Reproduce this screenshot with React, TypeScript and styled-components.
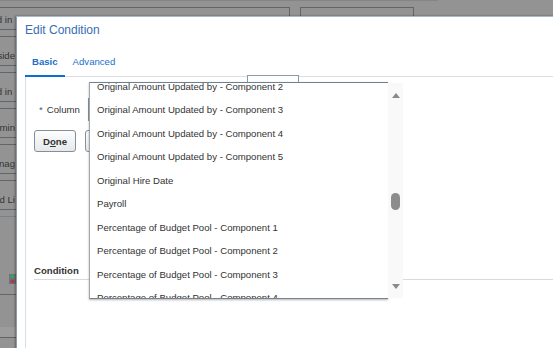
import React from "react";
import styled, { createGlobalStyle } from "styled-components";

const Global = createGlobalStyle`
  html, body { margin: 0; padding: 0; overflow: hidden; }
  body { font-family: "Liberation Sans", Arial, sans-serif; }
  #root { width: 553px; height: 348px; position: relative; overflow: hidden; }
`;

const FONT = 9.6;

/* ---------- background page (dimmed by modal) ---------- */
const BgPage = styled.div`
  width: 553px;
  height: 348px;
  background: #939393;
  display: flex;
  flex-direction: column;
  font-size: ${FONT}px;
  color: #343434;
`;

const BgTopLine = styled.div`
  width: 438px;
  height: 1px;
  background: #858585;
  margin-bottom: 6px;
`;

const BgRow = styled.div<{ $h: number }>`
  display: flex;
  gap: 10px;
  height: ${(p) => p.$h}px;
  margin-bottom: 6px;
  flex-shrink: 0;
`;

const BgCell = styled.div<{ $w: number; $boxed?: boolean }>`
  box-sizing: border-box;
  width: ${(p) => p.$w}px;
  border-top: 1px solid #5e666b;
  border-bottom: 1px solid #5e666b;
  border-right: 1px solid #5e666b;
  border-left: ${(p) => (p.$boxed ? "1px solid #5e666b" : "none")};
  display: flex;
`;

const BgLabel = styled.div`
  width: 15px;
  overflow: hidden;
  display: flex;
  justify-content: flex-end;
  align-items: flex-end;
  padding-bottom: 3px;
  line-height: 12px;
  white-space: pre;
`;

const BgFooterBox = styled.div`
  box-sizing: border-box;
  height: 79px;
  width: 290px;
  border-top: 1px solid #7a8084;
  border-bottom: 1px solid #5e666b;
  display: flex;
  align-items: flex-end;
  padding: 0 0 10px 9px;
`;

const BgBand = styled.div`
  margin-top: 32px;
  height: 10px;
  width: 290px;
  background: #9c9c9c;
  border-bottom: 1px solid #5e666b;
`;

/* ---------- dialog ---------- */
const Dialog = styled.div`
  position: absolute;
  left: 16px;
  top: 16px;
  width: 580px;
  height: 360px;
  background: #fff;
  border-top: 1px solid #a6b8cb;
  border-left: 1px solid #8b9bab;
  box-shadow: -1px 0 2px rgba(0, 0, 0, 0.35);
  display: flex;
  flex-direction: column;
  font-size: ${FONT}px;
  color: #333;
`;

const Header = styled.div`
  height: 29px;
  box-sizing: border-box;
  padding: 6px 0 0 8px;
`;

const Title = styled.div`
  font-size: 12px;
  line-height: 15px;
  color: #3a6db3;
`;

const TabBar = styled.div`
  height: 30px;
  display: flex;
  align-items: flex-start;
  padding-left: 8px;
`;

const Tab = styled.div<{ $active?: boolean; $pad: string }>`
  position: relative;
  z-index: 1;
  box-sizing: border-box;
  height: 31px;
  padding: 10px ${(p) => p.$pad} 0;
  line-height: 12px;
  color: #1a6fc9;
  font-weight: ${(p) => (p.$active ? 700 : 400)};
  border-bottom: 2px solid ${(p) => (p.$active ? "#0b6fce" : "transparent")};
`;

const Panel = styled.div`
  flex: 1;
  margin-left: 8px;
  border-top: 1px solid #d7dee4;
  border-left: 1px solid #d7dee4;
  display: flex;
  flex-direction: column;
`;

const FieldRow = styled.div`
  margin-top: 21px;
  height: 23px;
  display: flex;
  align-items: center;
  padding-left: 13px;
`;

const Required = styled.span`
  color: #2f5b8a;
  margin-right: 4px;
`;

const Label = styled.span`
  color: #333;
`;

const TextInput = styled.div`
  box-sizing: border-box;
  margin-left: 8px;
  width: 300px;
  height: 23px;
  border: 1px solid #8e979e;
  background: #fff;
`;

const ButtonRow = styled.div`
  margin-top: 9px;
  padding-left: 8px;
  display: flex;
  gap: 9px;
`;

const Button = styled.div<{ $w: number }>`
  box-sizing: border-box;
  width: ${(p) => p.$w}px;
  height: 22px;
  border: 1px solid #858f97;
  border-radius: 3px;
  background: linear-gradient(#fdfdfd, #e6e9eb);
  display: flex;
  align-items: center;
  justify-content: center;
  font-weight: 700;
  color: #333;
  u { text-decoration: underline; }
`;

const SectionHeader = styled.div`
  margin: 113px 0 0 8px;
  padding-bottom: 2px;
  line-height: 12px;
  font-weight: 700;
  color: #333;
  border-bottom: 1px solid #d5dbdf;
`;

/* ---------- overlays ---------- */
const HiddenBox = styled.div`
  position: absolute;
  left: 230px;
  top: 58px;
  width: 52px;
  height: 20px;
  box-sizing: border-box;
  border: 1px solid #8d9ba7;
  background: #fff;
  z-index: 2;
`;

const Popup = styled.div`
  position: absolute;
  left: 72px;
  top: 65px;
  height: 217px;
  display: flex;
  z-index: 3;
`;

const List = styled.div`
  box-sizing: border-box;
  width: 299px;
  height: 100%;
  background: #fff;
  border-top: 1px solid #6e8194;
  border-left: 1px solid #a2a7ab;
  border-bottom: 1px solid #76838e;
  box-shadow: 0 1px 2px rgba(0, 0, 0, 0.3);
  overflow: hidden;
`;

const ListInner = styled.div`
  margin-top: -8.5px;
`;

const Item = styled.div`
  height: 23.5px;
  line-height: 23.5px;
  padding-left: 7px;
  white-space: nowrap;
  color: #333;
`;

const ScrollBar = styled.div`
  width: 15px;
  margin: 1px 0;
  background: #f9f9f9;
  display: flex;
  flex-direction: column;
  align-items: center;
`;

const Arrow = styled.div<{ $dir: "up" | "down"; $mt: number }>`
  width: 0;
  height: 0;
  margin-top: ${(p) => p.$mt}px;
  border-left: 4.5px solid transparent;
  border-right: 4.5px solid transparent;
  ${(p) =>
    p.$dir === "up"
      ? "border-bottom: 5px solid #8a8a8a;"
      : "border-top: 5px solid #8a8a8a;"}
`;

const Thumb = styled.div<{ $mt: number }>`
  width: 9px;
  height: 17px;
  margin-top: ${(p) => p.$mt}px;
  border-radius: 4.5px;
  background: #8c8c8c;
`;

const items = [
  "Original Amount Updated by - Component 2",
  "Original Amount Updated by - Component 3",
  "Original Amount Updated by - Component 4",
  "Original Amount Updated by - Component 5",
  "Original Hire Date",
  "Payroll",
  "Percentage of Budget Pool - Component 1",
  "Percentage of Budget Pool - Component 2",
  "Percentage of Budget Pool - Component 3",
  "Percentage of Budget Pool - Component 4",
];

const bgRows = [
  { h: 23, text: "Updated in " },
  { h: 30, text: "Outside" },
  { h: 30, text: "Updated in " },
  { h: 30, text: "Determin" },
  { h: 30, text: "Manag" },
  { h: 30, text: "Read Li" },
];

const StatusIcon = () => (
  <svg width="7" height="10" viewBox="0 0 7 10">
    <rect x="0" y="0" width="7" height="10" fill="#6c7088" />
    <path d="M1 3.5 L3.5 1 L6 3.5 M3.5 1 V5" stroke="#3fa34d" strokeWidth="1.4" fill="none" />
    <circle cx="3.5" cy="7.3" r="1.9" fill="#c8303a" />
  </svg>
);

export default function App() {
  return (
    <>
      <Global />
      <BgPage>
        <BgTopLine />
        {bgRows.map((r, i) => (
          <BgRow key={i} $h={r.h}>
            <BgCell $w={290}>
              <BgLabel>{r.text}</BgLabel>
            </BgCell>
            <BgCell $w={114} $boxed />
          </BgRow>
        ))}
        <BgFooterBox>
          <StatusIcon />
        </BgFooterBox>
        <BgBand />
      </BgPage>

      <Dialog>
        <Header>
          <Title>Edit Condition</Title>
        </Header>
        <TabBar>
          <Tab $active $pad="7px">Basic</Tab>
          <Tab $pad="8px">Advanced</Tab>
        </TabBar>
        <Panel>
          <FieldRow>
            <Required>*</Required>
            <Label>Column</Label>
            <TextInput />
          </FieldRow>
          <ButtonRow>
            <Button $w={42}>
              <span>
                D<u>o</u>ne
              </span>
            </Button>
            <Button $w={60}>
              <span>
                <u>C</u>ancel
              </span>
            </Button>
          </ButtonRow>
          <SectionHeader>Condition</SectionHeader>
        </Panel>

        <HiddenBox />
        <Popup>
          <List>
            <ListInner>
              {items.map((t) => (
                <Item key={t}>{t}</Item>
              ))}
            </ListInner>
          </List>
          <ScrollBar>
            <Arrow $dir="up" $mt={10} />
            <Thumb $mt={95} />
            <Arrow $dir="down" $mt={74} />
          </ScrollBar>
        </Popup>
      </Dialog>
    </>
  );
}
